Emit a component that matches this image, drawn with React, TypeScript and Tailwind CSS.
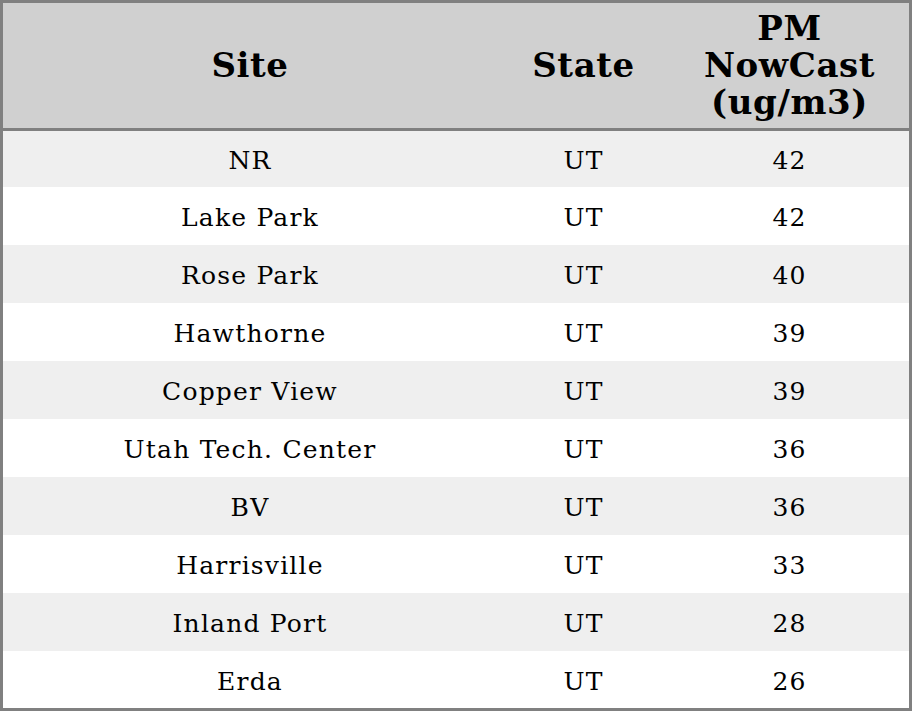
const rows: [string, string, number][] = [
  ["NR", "UT", 42],
  ["Lake Park", "UT", 42],
  ["Rose Park", "UT", 40],
  ["Hawthorne", "UT", 39],
  ["Copper View", "UT", 39],
  ["Utah Tech. Center", "UT", 36],
  ["BV", "UT", 36],
  ["Harrisville", "UT", 33],
  ["Inland Port", "UT", 28],
  ["Erda", "UT", 26],
];

const th = "p-0 text-[34px] leading-[37px] tracking-[0.6px] font-bold text-center border-b-[3px] border-[#808080]";
const td = "p-0 pt-[4px] text-[25px] leading-[32px] tracking-[1.2px] text-center";

export default function App() {
  return (
    <div className="w-[912px] h-[711px] bg-white font-['DejaVu_Serif',serif] text-black">
      <table className="w-[912px] border-separate border-spacing-0 border-[3px] border-[#808080] table-fixed">
        <colgroup>
          <col className="w-[494px]" />
          <col className="w-[173px]" />
          <col className="w-[239px]" />
        </colgroup>
        <thead>
          <tr className="h-[128px] bg-[#d0d0d0]">
            <th className={th}>Site</th>
            <th className={th}>State</th>
            <th className={th}>
              PM
              <br />
              NowCast
              <br />
              (ug/m3)
            </th>
          </tr>
        </thead>
        <tbody>
          {rows.map(([site, state, val], i) => {
            const h = i === 0 ? "h-[56px]" : i === rows.length - 1 ? "h-[57px]" : "h-[58px]";
            const bg = i % 2 === 0 ? "bg-[#efefef]" : "bg-white";
            return (
              <tr key={site} className={`${h} ${bg}`}>
                <td className={td}>{site}</td>
                <td className={td}>{state}</td>
                <td className={td}>{val}</td>
              </tr>
            );
          })}
        </tbody>
      </table>
    </div>
  );
}
